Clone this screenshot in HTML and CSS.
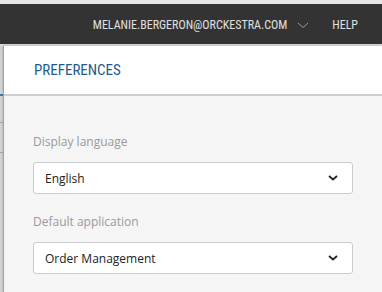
FILE: index.html
```html
<!DOCTYPE html>
<html lang="en-US"><head>
<meta charset="utf-8">
<meta name="viewport" content="width=device-width, initial-scale=1.0">
<link rel="stylesheet" href="styles.css">
</head><body>

<div class="top-strip"></div>
<div class="top-bar">
	<span class="user">MELANIE.BERGERON@ORCKESTRA.COM</span>
	<svg class="user-caret" width="12" height="7" viewBox="0 0 12 7"><path d="M1 1 L6 5.5 L11 1" fill="none" stroke="#9a9a9a" stroke-width="1"/></svg>
	<span class="help">HELP</span>
</div>

<div class="stage">
	<div class="page-behind">
		<div class="mark blue"></div>
		<div class="mark grey first"></div>
		<div class="mark grey second"></div>
	</div>
	<div class="panel">
		<div class="panel-head">PREFERENCES</div>
		<div class="panel-body">
			<div class="field">
				<label class="field-label">Display language</label>
				<div class="select"><span>English</span>
					<svg width="10" height="6" viewBox="0 0 10 6"><path d="M1 1 L5 4.5 L9 1" fill="none" stroke="#222" stroke-width="1.8"/></svg>
				</div>
			</div>
			<div class="field">
				<label class="field-label">Default application</label>
				<div class="select"><span>Order Management</span>
					<svg width="10" height="6" viewBox="0 0 10 6"><path d="M1 1 L5 4.5 L9 1" fill="none" stroke="#222" stroke-width="1.8"/></svg>
				</div>
			</div>
		</div>
	</div>
</div>

</body></html>
```

FILE: styles.css
```css
html, body {
	margin : 0 ;
	padding : 0 ;
	height : 100% ;
	overflow : hidden ;
	}
body {
	display : flex ;
	flex-direction : column ;
	background : #f5f5f5 ;
	font-family : "Open Sans", "Liberation Sans", sans-serif ;
	}
div.top-strip {
	height : 4px ;
	flex-shrink : 0 ;
	background : #e6e6e6 ;
	}
div.top-bar {
	height : 40px ;
	flex-shrink : 0 ;
	background : #333333 ;
	display : flex ;
	align-items : center ;
	justify-content : flex-end ;
	padding : 2px 24px 0 0 ;
	box-sizing : border-box ;
	font-family : "Roboto Condensed", "Liberation Sans Narrow", "DejaVu Sans Condensed", sans-serif ;
	font-size : 12px ;
	color : #e0e0e0 ;
	}
div.top-bar svg.user-caret {
	margin : 0 23px 0 10px ;
	}
div.stage {
	flex : 1 ;
	display : flex ;
	border-top : 2px solid #d9d9d9 ;
	}
div.page-behind {
	width : 3px ;
	background : #d4d4d4 ;
	border-right : 1px solid #b8b8b8 ;
	}
div.page-behind div.mark {
	height : 1px ;
	}
div.page-behind div.mark.blue {
	margin-top : 48px ;
	height : 2px ;
	background : #3d7ab0 ;
	}
div.page-behind div.mark.grey {
	background : #a8a8a8 ;
	}
div.page-behind div.mark.first {
	margin-top : 26px ;
	}
div.page-behind div.mark.second {
	margin-top : 29px ;
	}
div.panel {
	flex : 1 ;
	display : flex ;
	flex-direction : column ;
	box-shadow : -1px 0 3px rgba(0,0,0,0.2) ;
	}
div.panel-head {
	height : 48px ;
	flex-shrink : 0 ;
	background : #ffffff ;
	border-bottom : 2px solid #cfcfcf ;
	padding-left : 30px ;
	display : flex ;
	align-items : center ;
	font-family : "Roboto Condensed", "Liberation Sans Narrow", "DejaVu Sans Condensed", sans-serif ;
	font-size : 15px ;
	color : #1f5b8c ;
	}
div.panel-body {
	flex : 1 ;
	background : #f5f5f5 ;
	padding : 38px 29px 0 29px ;
	}
div.field {
	margin-bottom : 20px ;
	}
label.field-label {
	display : block ;
	font-size : 12px ;
	line-height : 16px ;
	color : #9a9a9a ;
	margin-bottom : 12px ;
	}
div.select {
	height : 30px ;
	background : #ffffff ;
	border : 1px solid #cccccc ;
	border-radius : 3px ;
	display : flex ;
	align-items : center ;
	justify-content : space-between ;
	padding : 0 14px 0 11px ;
	font-size : 12px ;
	color : #222 ;
	}
```
